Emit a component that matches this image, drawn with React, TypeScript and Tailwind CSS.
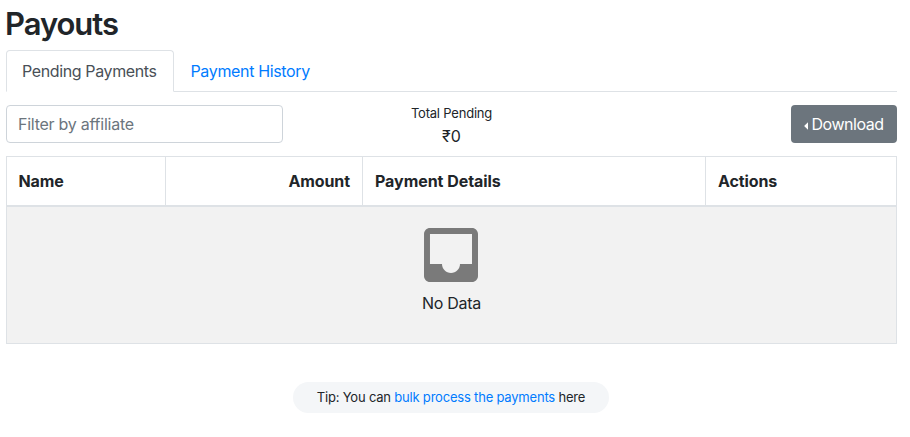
export default function App() {
  return (
    <div className="h-[437px] w-[910px] overflow-hidden bg-white pl-[6px] pr-[13px] pt-[5px] font-['Inter','Liberation_Sans',sans-serif] text-base text-[#212529]">
      <h1 className="-ml-px h-[45px] text-[31px] font-semibold leading-[38px] tracking-[-1.05px]">Payouts</h1>

      <nav className="flex h-[42px] border-b border-[#dee2e6]">
        <a className="h-[42px] w-[168px] rounded-t border border-b-white border-[#dee2e6] bg-white pl-[15px] pt-2 leading-6 tracking-[-0.38px] whitespace-nowrap text-[#495057]">
          Pending Payments
        </a>
        <a className="pl-[16.5px] pt-[9px] leading-6 tracking-[-0.35px] whitespace-nowrap text-[#007bff]">Payment History</a>
      </nav>

      <div className="mt-[13px] grid h-[38px] grid-cols-[1fr_120px_1fr]">
        <input
          className="h-[38px] w-[277px] rounded border border-[#ced4da] pl-[11px] pr-3 tracking-[-0.25px] outline-none placeholder:text-[#6c757d]"
          placeholder="Filter by affiliate"
        />
        <div className="text-center">
          <div className="h-[19px] text-[13px] leading-4 tracking-[-0.2px] whitespace-nowrap">Total Pending</div>
          <div className="leading-6">₹0</div>
        </div>
        <button className="flex h-[38px] w-[106px] items-center justify-self-end rounded bg-[#6c757d] pl-[13px] tracking-[-0.45px] text-white">
          <svg className="mr-[3.5px] mt-[3px] h-[8px] w-[4px]" viewBox="0 0 4 8" fill="currentColor">
            <path d="M4 0.2v7.6L0.1 4z" />
          </svg>
          Download
        </button>
      </div>

      <div className="mt-[13px] h-[188px] border border-[#dee2e6]">
        <div className="grid h-[50px] grid-cols-[159px_197px_343px_1fr] border-b-2 border-[#dee2e6] font-bold leading-[48px] tracking-[-0.1px]">
          <div className="border-r border-[#dee2e6] pl-[11.5px]">Name</div>
          <div className="border-r border-[#dee2e6] pr-[12px] text-right">Amount</div>
          <div className="border-r border-[#dee2e6] pl-[12px] tracking-[-0.05px]">Payment Details</div>
          <div className="pl-[12px]">Actions</div>
        </div>
        <div className="flex h-[136px] flex-col items-center bg-[#f2f2f2] pr-px pt-[12px]">
          <svg className="size-[72px]" viewBox="0 0 24 24" fill="#7a7a7a">
            <path d="M19 3H4.99c-1.11 0-1.98.89-1.98 2L3 19c0 1.1.88 2 1.99 2H19c1.1 0 2-.9 2-2V5c0-1.11-.9-2-2-2zm0 12h-4c0 1.66-1.35 3-3 3s-3-1.34-3-3H4.99V5H19v10z" />
          </svg>
          <div className="pl-px leading-6 tracking-[-0.25px]">No Data</div>
        </div>
      </div>

      <div className="ml-[287px] mt-[38px] h-[31px] w-[316px] rounded-full bg-[#f4f6f8] text-center text-[13px] leading-[31px] tracking-[-0.2px] whitespace-nowrap">
        Tip: You can <a className="text-[#007bff]">bulk process the payments</a> here
      </div>
    </div>
  );
}
